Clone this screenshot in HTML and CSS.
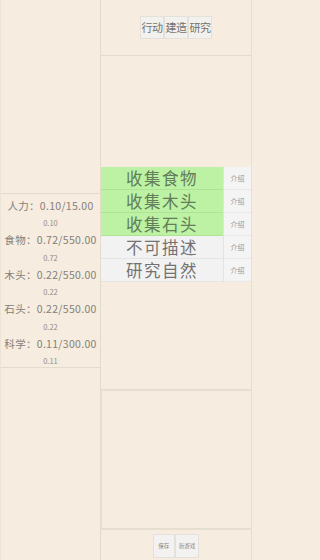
FILE: index.html
```html
<!DOCTYPE html>
<html lang="zh">
<head>
<meta charset="utf-8">
<link rel="stylesheet" href="styles.css">
</head>
<body>
<div class="page">
  <aside class="left">
    <div class="stats">
      <div class="stat"><div class="main">人力：0.10/15.00</div><div class="rate">0.10</div></div>
      <div class="stat"><div class="main">食物：0.72/550.00</div><div class="rate">0.72</div></div>
      <div class="stat"><div class="main">木头：0.22/550.00</div><div class="rate">0.22</div></div>
      <div class="stat"><div class="main">石头：0.22/550.00</div><div class="rate">0.22</div></div>
      <div class="stat"><div class="main">科学：0.11/300.00</div><div class="rate">0.11</div></div>
    </div>
  </aside>
  <main class="right">
    <div class="tabs">
      <div class="tab">行动</div><div class="tab">建造</div><div class="tab">研究</div>
    </div>
    <div class="middle">
      <div class="actions">
        <div class="row"><div class="act done">收集食物</div><div class="info">介绍</div></div>
        <div class="row"><div class="act done">收集木头</div><div class="info">介绍</div></div>
        <div class="row"><div class="act done">收集石头</div><div class="info">介绍</div></div>
        <div class="row"><div class="act">不可描述</div><div class="info">介绍</div></div>
        <div class="row"><div class="act">研究自然</div><div class="info">介绍</div></div>
      </div>
    </div>
    <div class="log"></div>
    <div class="footer">
      <div class="btn">保存</div><div class="btn">新游戏</div>
    </div>
  </main>
</div>
</body>
</html>
```
FILE: styles.css
```css
* { box-sizing: border-box; }
html, body { margin: 0; padding: 0; }
body {
  background: #f6ecdf;
  font-family: "Noto Sans CJK SC", "Noto Sans", sans-serif;
  color: #7a7670;
}
.page {
  display: flex;
  height: 560px;
  width: 252px;
}
.left {
  width: 101px;
  border-right: 1px solid #e3dbcd;
  border-left: 1px solid #ece4d6;
  display: flex;
  flex-direction: column;
  justify-content: center;
}
.stats {
  border-top: 1px solid #e3dbcd;
  border-bottom: 1px solid #e3dbcd;
  padding: 3px 0 0;
  height: 175px;
}
.stat { text-align: center; }
.stat .main {
  font-size: 10.5px;
  line-height: 17.5px;
  letter-spacing: 0.3px;
  color: #85807a;
}
.stat .rate {
  font-size: 7.5px;
  line-height: 17px;
  color: #928d86;
}
.right {
  flex: 1;
  display: flex;
  flex-direction: column;
  border-right: 1px solid #e6dfd2;
}
.tabs {
  height: 56px;
  border-bottom: 1px solid #e3dbcd;
  display: flex;
  justify-content: center;
  align-items: center;
}
.tab {
  width: 24px;
  height: 23px;
  background: #f3f1ee;
  border: 1px solid #e4e0da;
  font-size: 11px;
  line-height: 21px;
  text-align: center;
  color: #75716c;
  letter-spacing: -0.5px;
  white-space: nowrap;
}
.middle {
  flex: 1;
  display: flex;
  align-items: center;
  padding-top: 4px;
}
.actions { width: 150px; }
.row { display: flex; height: 23px; }
.act {
  width: 122px;
  background: #f2f2f2;
  border-bottom: 1px solid #e4e4e4;
  font-size: 16.5px;
  line-height: 22px;
  text-align: center;
  letter-spacing: 1.5px;
  color: #727272;
}
.act.done { background: #bdf2a4; border-bottom-color: #aee294; color: #627d58; }
.info {
  width: 28px;
  background: #f4f4f4;
  border-left: 1px solid #e2e2e2;
  border-bottom: 1px solid #e8e8e8;
  font-size: 7px;
  line-height: 22px;
  text-align: center;
  color: #999;
}
.log {
  height: 141px;
  border-top: 2px solid #e6dfd1;
  border-bottom: 2px solid #e6dfd1;
  border-left: 1px solid #e6dfd1;
  margin-bottom: 1px;
}
.footer {
  height: 29px;
  display: flex;
  justify-content: center;
  align-items: flex-end;
  padding-bottom: 2px;
}
.btn {
  height: 24px;
  padding: 0 3px;
  background: #f3f2f0;
  border: 1px solid #e4e0da;
  font-size: 5.5px;
  line-height: 22px;
  color: #888;
  min-width: 22px;
  text-align: center;
}
```
